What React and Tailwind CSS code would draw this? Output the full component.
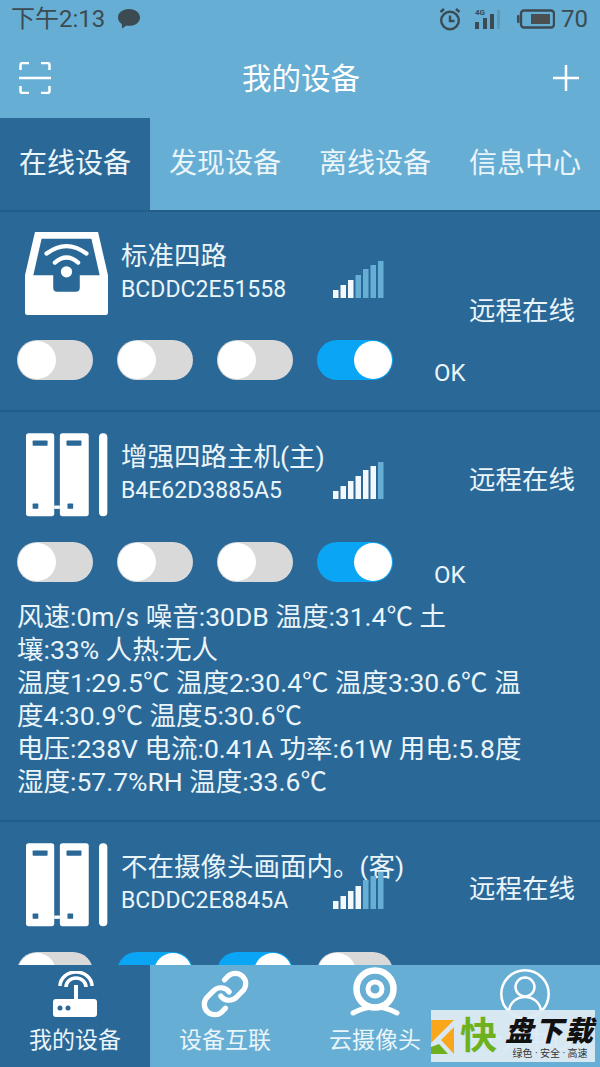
import { Link } from "lucide-react";

function InboxIcon() {
  return (
    <svg width="83" height="83" viewBox="0 0 250 250" className="shrink-0">
      <path d="M30 0H220L250 130V243Q250 250 243 250H7Q0 250 0 243V130Z" fill="#fff" />
      <path d="M50 20H200L225 130H165V168Q165 180 153 180H97Q85 180 85 168V130H25Z" fill="#2a6898" />
      <path d="M65 65Q125 20 185 65M90 92Q125 62 160 92" fill="none" stroke="#fff" strokeWidth="13" strokeLinecap="round" />
      <circle cx="125" cy="120" r="17" fill="#fff" />
    </svg>
  );
}

function HostIcon() {
  return (
    <svg width="83" height="84" viewBox="0 0 250 252" className="shrink-0">
      <rect x="3" y="0" width="85" height="250" rx="8" fill="#fff" />
      <rect x="105" y="0" width="87" height="250" rx="8" fill="#fff" />
      <rect x="88" y="218" width="17" height="10" fill="#fff" />
      <rect x="223" y="0" width="25" height="250" rx="12" fill="#fff" />
      <rect x="23" y="22" width="45" height="16" rx="2" fill="#2a6898" />
      <rect x="125" y="22" width="45" height="16" rx="2" fill="#2a6898" />
      <rect x="23" y="212" width="17" height="16" rx="2" fill="#2a6898" />
      <rect x="128" y="212" width="17" height="16" rx="2" fill="#2a6898" />
    </svg>
  );
}

function Signal({ level }) {
  const heights = [8, 13, 18, 23, 29, 33, 37];
  return (
    <svg width="51" height="37" viewBox="0 0 51 37" className="shrink-0">
      {heights.map((h, i) => (
        <rect key={i} x={i * 7.5} y={37 - h} width="5.5" height={h} fill={i < level ? "#f2f8fb" : "#66aed4"} />
      ))}
    </svg>
  );
}

function Toggle({ on }) {
  return (
    <div className={`w-[76px] h-10 rounded-full p-px flex shrink-0 ${on ? "bg-[#0aa6f5] justify-end" : "bg-[#d9d9d9] justify-start"}`}>
      <div className="w-[38px] h-[38px] rounded-full bg-white" />
    </div>
  );
}

function DeviceHead({ icon, title, id, level, statusTop }) {
  return (
    <div className="flex pl-[25px] items-start">
      {icon}
      <div className="w-[212px] ml-[13px] shrink-0 whitespace-nowrap">
        <div className="text-[26.5px] leading-[34px] mt-[7px]">{title}</div>
        <div className="text-[23px] leading-[34px]">{id}</div>
      </div>
      <div className="mt-[29px] shrink-0">
        <Signal level={level} />
      </div>
      <div className={`ml-[85px] text-[26.5px] leading-9 whitespace-nowrap ${statusTop}`}>远程在线</div>
    </div>
  );
}

function Toggles({ states, ok }) {
  return (
    <div className="flex items-start pl-[17px] gap-6">
      {states.map((on, i) => (
        <Toggle key={i} on={on} />
      ))}
      {ok && <div className="ml-[17px] mt-[17px] text-[24px] leading-8">OK</div>}
    </div>
  );
}

const sensorLines = [
  "风速:0m/s 噪音:30DB 温度:31.4℃ 土",
  "壤:33% 人热:无人",
  "温度1:29.5℃ 温度2:30.4℃ 温度3:30.6℃ 温",
  "度4:30.9℃ 温度5:30.6℃",
  "电压:238V 电流:0.41A 功率:61W 用电:5.8度",
  "湿度:57.7%RH 温度:33.6℃",
];

function Tab({ label, active }) {
  return (
    <div className={`w-[150px] flex items-center justify-center text-[28px] ${active ? "bg-[#2a6898]" : ""}`}>{label}</div>
  );
}

function NavItem({ icon, label, active }) {
  return (
    <div className={`flex flex-col items-center h-full ${active ? "bg-[#2a6898]" : ""}`}>
      <div className="h-[57px] w-full flex items-center justify-center">{icon}</div>
      <div className="text-[23px] leading-8 mt-[3px]">{label}</div>
    </div>
  );
}

export default function App() {
  return (
    <div
      className="relative w-[600px] h-[1067px] overflow-hidden flex flex-col bg-[#2a6898] text-[#eaf5fa]"
      style={{ fontFamily: 'Roboto, "Noto Sans CJK SC", sans-serif' }}
    >
      <div className="bg-[#66aed4] shrink-0">
        {/* status bar */}
        <div className="h-[38px] flex items-center pl-[11px] pr-[12px] text-[#3c4a52] text-[24px]">
          <span>下午2:13</span>
          <svg width="24" height="20" viewBox="0 0 24 20" className="ml-3">
            <path d="M12 0C5.5 0 1 3.6 1 8.5c0 2.8 1.5 5 3.8 6.5L5 19.5l4.5-3c.9.2 1.8.3 2.5.3 6.5 0 11-3.5 11-8.300S18.5 0 12 0Z" fill="#3c4a52" />
          </svg>
          <div className="flex-1" />
          <svg width="22" height="23" viewBox="0 0 22 23" fill="none" stroke="#3c4a52" strokeWidth="2.4">
            <circle cx="11" cy="12.5" r="8.8" />
            <path d="M11 7.5v5.5h4.5M1.5 4 5 1M20.5 4 17 1" />
          </svg>
          <svg width="30" height="24" viewBox="0 0 30 24" className="ml-[13px]" fill="#3c4a52">
            <text x="1" y="8" fontSize="8" fontWeight="700">4G</text>
            <rect x="1" y="15" width="4" height="7" />
            <rect x="9" y="11" width="4" height="11" />
            <rect x="16" y="7" width="4" height="15" />
            <rect x="23" y="3" width="3" height="19" opacity="0.2" />
          </svg>
          <svg width="38" height="20" viewBox="0 0 38 20" className="ml-[13px]">
            <rect x="4" y="1.5" width="33" height="17" rx="3" fill="none" stroke="#3c4a52" strokeWidth="2.4" />
            <rect x="0" y="6" width="2.5" height="8" rx="1" fill="#3c4a52" />
            <rect x="14" y="5" width="19" height="10" fill="#4b4f50" />
          </svg>
          <span className="ml-[6px]">70</span>
        </div>

        {/* title bar */}
        <div className="h-[80px] flex items-center justify-between pl-[19px] pr-[21px] text-white">
          <svg width="32" height="32" viewBox="0 0 32 32" fill="none" stroke="#fff" strokeWidth="2.5">
            <path d="M1.500 8V3a2 2 0 0 1 2-2H10M22 1h6.500a2 2 0 0 1 2 2v5M0 16h32M1.500 24v5a2 2 0 0 0 2 2H10M22 31h6.500a2 2 0 0 0 2-2v-5" />
          </svg>
          <div className="text-[29.5px] pt-[3px] pr-[2px]">我的设备</div>
          <svg width="26" height="26" viewBox="0 0 26 26" stroke="#fff" strokeWidth="2.5">
            <path d="M13 0v26M0 13h26" />
          </svg>
        </div>

        {/* tabs */}
        <div className="h-[92px] flex">
          <Tab label="在线设备" active />
          <Tab label="发现设备" />
          <Tab label="离线设备" />
          <Tab label="信息中心" />
        </div>
      </div>

      <div className="flex-1 min-h-0 overflow-hidden">
        <div className="h-[202px] pt-[20px] border-t-2 border-b-2 border-t-[#235d8a] border-b-[#235d8a]">
          <DeviceHead icon={<InboxIcon />} title="标准四路" id="BCDDC2E51558" level={3} statusTop="mt-[61px]" />
          <div className="mt-[11px]">
            <Toggles states={[false, false, false, true]} ok />
          </div>
        </div>

        <div className="h-[410px] pt-[21px] border-b-2 border-b-[#235d8a]">
          <DeviceHead icon={<HostIcon />} title="增强四路主机(主)" id="B4E62D3885A5" level={6} statusTop="mt-[29px]" />
          <div className="mt-[25px]">
            <Toggles states={[false, false, false, true]} ok />
          </div>
          <div className="mt-[9px] px-[17px] text-[26.5px] leading-[33px] whitespace-nowrap">
            {sensorLines.map((line) => (
              <div key={line}>{line}</div>
            ))}
          </div>
        </div>

        <div className="pt-[21px]">
          <DeviceHead icon={<HostIcon />} title="不在摄像头画面内。(客)" id="BCDDC2E8845A" level={4} statusTop="mt-[28px]" />
          <div className="mt-[25px]">
            <Toggles states={[false, true, true, false]} />
          </div>
        </div>
      </div>

      {/* bottom nav */}
      <div className="h-[102px] shrink-0 grid grid-cols-4 bg-[#66aed4] text-[#eaf5fa]">
        <NavItem
          active
          label="我的设备"
          icon={
            <svg width="46" height="46" viewBox="0 0 46 46" fill="none">
              <rect x="1" y="28" width="44" height="18" rx="3" fill="#fff" />
              <circle cx="8" cy="37" r="2.5" fill="#2a6898" />
              <circle cx="16" cy="37" r="2.5" fill="#2a6898" />
              <path d="M24 28V14" stroke="#fff" strokeWidth="4" />
              <path d="M8 15a16 14 0 0 1 32 0M14 16a10 9 0 0 1 20 0" stroke="#fff" strokeWidth="3.5" />
            </svg>
          }
        />
        <NavItem label="设备互联" icon={<Link size={50} strokeWidth={2.5} color="#fff" />} />
        <NavItem
          label="云摄像头"
          icon={
            <svg width="50" height="50" viewBox="0 0 50 50" fill="none" stroke="#fff" className="-mt-[3px]">
              <circle cx="25" cy="22" r="18.5" strokeWidth="6.5" />
              <circle cx="25" cy="22" r="7" strokeWidth="5" />
              <path d="M3 46Q25 34 47 46" strokeWidth="5" strokeLinecap="round" />
            </svg>
          }
        />
        <NavItem
          label="个人中心"
          icon={
            <svg width="50" height="50" viewBox="0 0 50 50" fill="none" stroke="#fff" strokeWidth="2.5">
              <circle cx="25" cy="25" r="23.7" />
              <circle cx="25" cy="18" r="9.5" />
              <path d="M9 42c1-9 8-14 16-14s15 5 16 14" />
            </svg>
          }
        />
      </div>

      {/* download-site watermark */}
      <div className="absolute left-[431px] top-[1010px] w-[164px] h-[52px] bg-[#deebf4]/95 flex items-start pt-[8px] text-[#111]">
        <svg width="23" height="34" viewBox="0 0 23 34" className="shrink-0 mt-[2px]">
          <path d="M0 0H23L0 23Z" fill="#f9a61a" />
          <path d="M23 7V34L10 20Z" fill="#f9a61a" />
          <path d="M0 27V34H17L8 24Z" fill="#6fb01e" />
        </svg>
        <div className="w-[38px] ml-[6px] text-[37px] leading-[38px] font-bold text-[#6fb01e]">快</div>
        <div className="ml-[7px] flex flex-col items-center">
          <div className="text-[28px] leading-[28px] font-black tracking-[2px] italic whitespace-nowrap">盘下载</div>
          <div className="text-[10px] leading-3 mt-[2px] whitespace-nowrap text-[#333]">绿色 · 安全 · 高速</div>
        </div>
      </div>
    </div>
  );
}
